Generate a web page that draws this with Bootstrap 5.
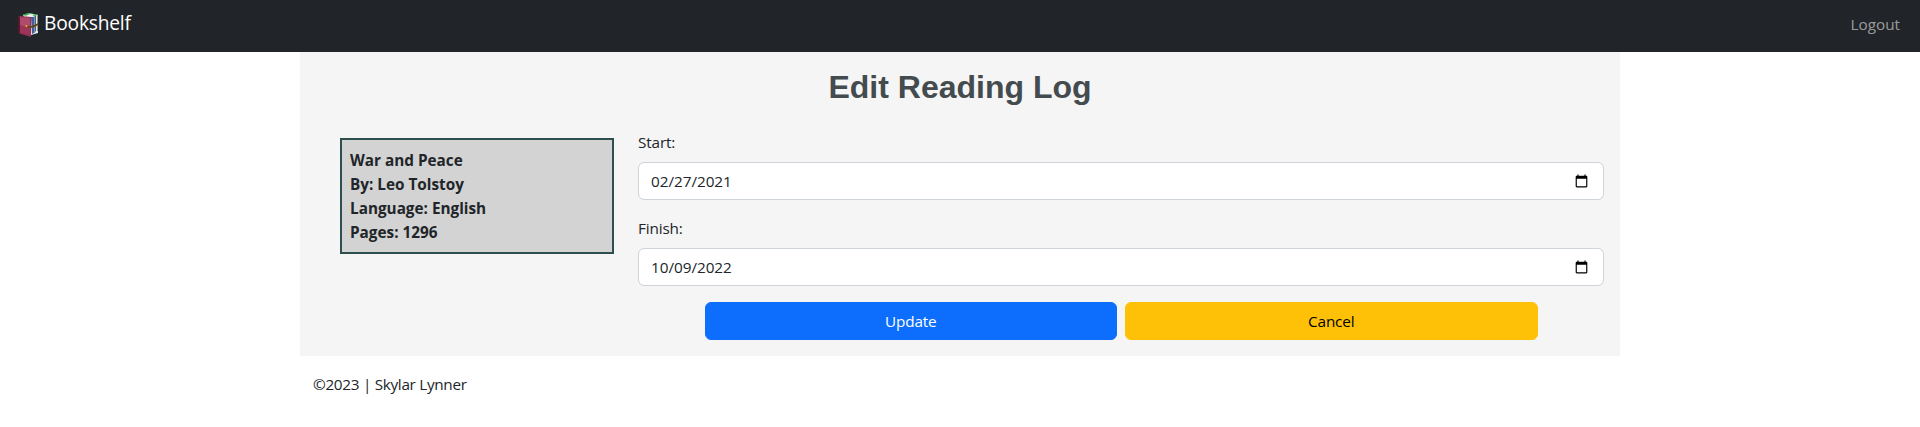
<!DOCTYPE html>
<html lang="en">
<head>
<meta charset="utf-8">
<meta name="viewport" content="width=device-width, initial-scale=1">
<title>Bookshelf</title>
<link href="https://cdn.jsdelivr.net/npm/bootstrap@5.3.0/dist/css/bootstrap.min.css" rel="stylesheet">
<style>
  body { font-family: "Open Sans", "Noto Sans", sans-serif; font-size: 15.3px; line-height: 24px; letter-spacing: -.15px; }
  .top-nav { height: 52px; padding: 0 20px 0 18px; }
  .top-nav .navbar-brand { font-size: 19.2px; line-height: 30px; letter-spacing: -.2px; padding: 0 0 6px; gap: 4px; }
  .top-nav .navbar-brand svg { margin-top: 3px; }
  .top-nav .nav-link { padding: 0 0 4px; letter-spacing: 0; }
  .panel { background: #f5f5f5; padding: 16px 16px 16px 40px; }
  .page-title { font: bold 32px/38.4px "Liberation Sans", Arial, sans-serif; letter-spacing: 0; color: #434b4f; margin: 0 0 24px -24px; }
  .book-info { width: 274px; background: #d3d3d3; border: 2px solid #2f4f4f; letter-spacing: 0; }
  .form-control, .btn { font-size: 15.3px; line-height: 24px; letter-spacing: inherit; height: 38px; }
  .form-control { border-color: #ced4da; letter-spacing: -.05px; }
  .form-actions { width: 833px; }
  .site-footer { letter-spacing: -.3px; padding-left: 13px; }
</style>
</head>
<body>
<nav class="navbar navbar-dark bg-dark top-nav">
  <a class="navbar-brand d-flex align-items-center m-0" href="#">
    <svg width="22" height="24" viewBox="0 0 22 24" aria-hidden="true">
      <path d="M5 2 11 0 20 2v18l-7 2z" fill="#e4e8ee"/>
      <path d="m4 2 6-2 5 1-6 2zM14 2l4-1 2 1-4 1z" fill="#36a545"/>
      <path d="m7 3 5-2 4 1-5 2z" fill="#f4f4f4"/>
      <path d="m13 4 1 17 2-1V4zM17 3v16l1-1V3z" fill="#465b9c"/>
      <path d="M16 3v17h1V3zM19 3v15h1V2z" fill="#829c91"/>
      <path d="m0 4 2-1 11 1v20L0 20z" fill="#943052"/>
      <path d="m2 4 10 1v16L2 18z" fill="#b04a6b"/>
      <path d="m2 12 10 3v7L2 19z" fill="#9d3559"/>
      <path d="M0 4v16l2 .5V4z" fill="#57182f"/>
      <path d="M8 13c4 2 8 1 12-2" fill="none" stroke="#694315" stroke-width="1.7"/>
      <circle cx="8.5" cy="13" r="1" fill="#e3b832"/>
    </svg>
    <span>Bookshelf</span>
  </a>
  <div class="navbar-nav"><a class="nav-link" href="#">Logout</a></div>
</nav>
<main class="container panel">
  <h1 class="page-title text-center">Edit Reading Log</h1>
  <div class="d-flex align-items-start gap-4">
    <div class="book-info p-2 mt-2 fw-bold flex-shrink-0">
      <div>War and Peace</div>
      <div>By: Leo Tolstoy</div>
      <div>Language: English</div>
      <div>Pages: 1296</div>
    </div>
    <form class="flex-grow-1">
      <div class="mb-3">
        <label class="form-label d-block mb-2" for="start">Start:</label>
        <input class="form-control" type="date" id="start" value="2021-02-27">
      </div>
      <div class="mb-3">
        <label class="form-label d-block mb-2" for="finish">Finish:</label>
        <input class="form-control" type="date" id="finish" value="2022-10-09">
      </div>
      <div class="form-actions d-flex gap-2 mx-auto">
        <button class="btn btn-primary w-50" type="submit">Update</button>
        <button class="btn btn-warning w-50" type="button">Cancel</button>
      </div>
    </form>
  </div>
</main>
<footer class="container site-footer pt-3">©2023 | Skylar Lynner</footer>
<script src="https://cdn.jsdelivr.net/npm/bootstrap@5.3.0/dist/js/bootstrap.bundle.min.js"></script>
</body>
</html>
